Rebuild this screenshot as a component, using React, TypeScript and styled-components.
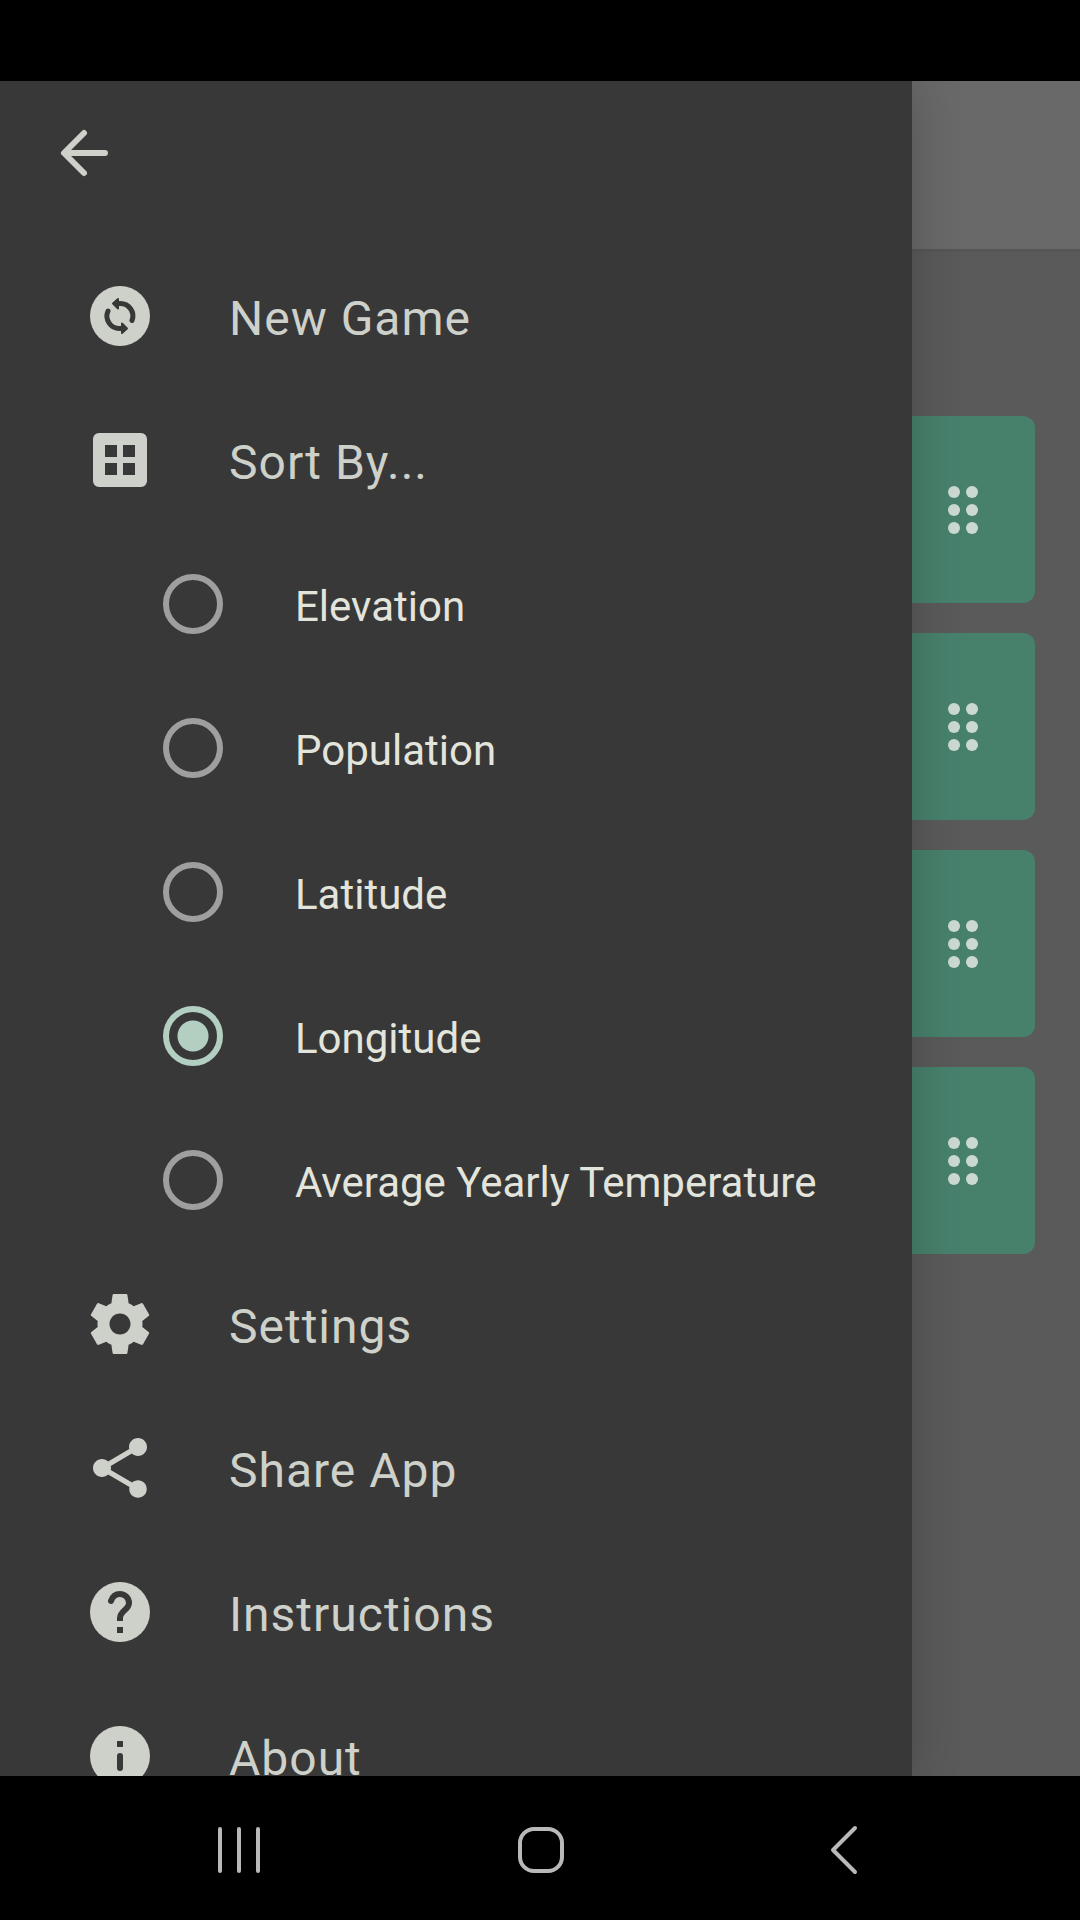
import React, { useState } from "react";
import styled, { createGlobalStyle } from "styled-components";
import { MdShare } from "react-icons/md";

const GlobalStyle = createGlobalStyle`
  *, *::before, *::after { box-sizing: border-box; }
  body { margin: 0; background: #000; }
`;

const Screen = styled.div`
  display: grid;
  grid-template-rows: 81px minmax(0, 1fr) 144px;
  height: 100vh;
  background: #000;
  font-family: Roboto, "Noto Sans", sans-serif;
`;

const StatusBar = styled.header`
  background: #000;
`;

const Stage = styled.div`
  position: relative;
  overflow: hidden;
  background: #5a5a5a;
`;

const AppBar = styled.div`
  height: 168px;
  background: #696969;
  box-shadow: 0 1px 3px rgba(0, 0, 0, 0.1);
`;

const CardList = styled.ul`
  display: flex;
  flex-direction: column;
  gap: 30px;
  margin: 0;
  padding: 167px 45px 0;
  list-style: none;
`;

const Card = styled.li`
  display: flex;
  align-items: center;
  justify-content: flex-end;
  height: 187px;
  padding-right: 36px;
  border-radius: 12px;
  background: #47816c;
  color: #ccd9d3;
`;

const Drawer = styled.aside`
  position: absolute;
  inset: 0 168px 0 0;
  overflow: hidden;
  background: #383838;
  box-shadow: 0 0 48px rgba(0, 0, 0, 0.2);
`;

const DrawerHeader = styled.div`
  display: flex;
  align-items: center;
  height: 144px;
  padding: 0 48px;
`;

const IconButton = styled.button`
  display: flex;
  padding: 0;
  border: 0;
  background: none;
  color: #ced0ca;
`;

const Menu = styled.nav`
  display: flex;
  flex-direction: column;
  padding-top: 19px;
`;

const MenuButton = styled.button`
  display: flex;
  align-items: center;
  gap: 73px;
  height: 144px;
  padding: 0 84px;
  border: 0;
  background: none;
  color: #ced0ca;
  font: 400 48px/56px Roboto, "Noto Sans", sans-serif;
  letter-spacing: 1px;
  text-align: left;
`;

const Label = styled.span`
  padding-top: 5px;
  white-space: nowrap;
`;

const SortOptions = styled.fieldset`
  margin: 0;
  padding: 0;
  border: 0;
`;

const Option = styled.label`
  display: flex;
  align-items: center;
  gap: 72px;
  height: 144px;
  padding-left: 163px;
  color: #e3e5dd;
  font-size: 42px;
  line-height: 50px;
`;

const Radio = styled.input`
  appearance: none;
  flex: none;
  width: 60px;
  height: 60px;
  margin: 0;
  border: 6px solid #9f9f9f;
  border-radius: 50%;

  &:checked {
    border-color: #b3cfc1;
    background: radial-gradient(circle, #b3cfc1 15px, transparent 16px);
  }
`;

const SystemBar = styled.footer`
  display: grid;
  grid-template-columns: repeat(3, 1fr);
  padding: 0 88px;
  background: #000;
`;

const SystemButton = styled.button`
  display: flex;
  align-items: center;
  justify-content: center;
  padding: 4px 0 0;
  border: 0;
  background: none;
  color: #b9b9b9;
`;

const Glyph = styled.svg.attrs({ viewBox: "0 0 72 72", "aria-hidden": true })`
  flex: none;
  width: 72px;
  height: 72px;
  fill: currentColor;
`;

const LineGlyph = styled(Glyph)`
  fill: none;
  stroke: currentColor;
  stroke-linecap: round;
  stroke-linejoin: round;
`;

const Cutout = styled.g`
  fill: none;
  stroke: #383838;
  stroke-width: 5;
  stroke-linecap: round;
`;

const Hole = styled.g`
  fill: #383838;
`;

const RoundedHole = styled(Hole)`
  stroke: #383838;
  stroke-width: 2;
  stroke-linejoin: round;
`;

const BackArrow = () => (
  <LineGlyph strokeWidth={6}>
    <path d="M57 36H17M36 16L16 36L36 56" />
  </LineGlyph>
);

const NewGameIcon = () => (
  <Glyph>
    <circle cx="36" cy="36" r="30" />
    <Cutout>
      <path d="M34 23.500H36A12.500 12.500 0 0 1 48 40.500" />
      <path d="M38 48.500H36A12.500 12.500 0 0 1 24 31" />
    </Cutout>
    <RoundedHole>
      <path d="M34 19V28.500L29 23.500Z" />
      <path d="M38 53V43.500L43 48.500Z" />
    </RoundedHole>
  </Glyph>
);

const SortIcon = () => (
  <Glyph>
    <path
      fillRule="evenodd"
      d="M15 9H57A6 6 0 0 1 63 15V57A6 6 0 0 1 57 63H15A6 6 0 0 1 9 57V15A6 6 0 0 1 15 9ZM21 21V33H33V21ZM39 21V33H51V21ZM21 39V51H33V39ZM39 39V51H51V39Z"
    />
  </Glyph>
);

const SettingsIcon = () => (
  <Glyph>
    <path
      transform="scale(3)"
      d="M19.43 12.98c.04-.32.07-.64.07-.98s-.03-.66-.07-.98l2.110-1.650c.19-.15.24-.42.12-.64l-2-3.460c-.12-.22-.39-.3-.61-.22l-2.490 1c-.52-.4-1.080-.73-1.690-.98l-.38-2.650C14.460 2.180 14.250 2 14 2h-4c-.25 0-.46.18-.49.42l-.38 2.650c-.61.25-1.170.59-1.690.98l-2.490-1c-.23-.09-.49 0-.61.22l-2 3.460c-.13.22-.07.49.12.64l2.110 1.650c-.04.32-.07.65-.07.98s.03.66.07.98l-2.110 1.650c-.19.15-.24.42-.12.64l2 3.460c.12.22.39.3.61.22l2.490-1c.52.4 1.080.73 1.690.98l.38 2.650c.03.24.24.42.49.42h4c.25 0 .46-.18.49-.42l.38-2.650c.61-.25 1.170-.59 1.690-.98l2.490 1c.23.09.49 0 .61-.22l2-3.460c.12-.22.07-.49-.12-.64l-2.110-1.650zM12 15.500c-1.930 0-3.500-1.570-3.500-3.500s1.570-3.500 3.500-3.500 3.500 1.570 3.500 3.500-1.570 3.500-3.500 3.500z"
    />
  </Glyph>
);

const HelpIcon = () => (
  <Glyph>
    <circle cx="36" cy="36" r="30" />
    <Cutout>
      <path
        strokeWidth="6"
        d="M27 25C28.500 20.500 32 18 36 18C41 18 45 22 45 27C45 34 36 34.500 36 42"
      />
    </Cutout>
    <Hole>
      <rect x="33" y="41" width="6" height="4" />
      <rect x="33" y="51" width="6" height="6" />
    </Hole>
  </Glyph>
);

const InfoIcon = () => (
  <Glyph>
    <circle cx="36" cy="36" r="30" />
    <Hole>
      <rect x="33" y="21" width="6" height="6" />
      <rect x="33" y="33" width="6" height="18" rx="3" />
    </Hole>
  </Glyph>
);

const DragHandle = () => (
  <Glyph>
    {[18, 36, 54].map((y) => (
      <React.Fragment key={y}>
        <circle cx="27" cy={y} r="6" />
        <circle cx="45" cy={y} r="6" />
      </React.Fragment>
    ))}
  </Glyph>
);

const sortOptions = [
  "Elevation",
  "Population",
  "Latitude",
  "Longitude",
  "Average Yearly Temperature",
];

type MenuItemProps = { icon: React.ReactNode; children: React.ReactNode };

const MenuItem = ({ icon, children }: MenuItemProps) => (
  <MenuButton type="button">
    {icon}
    <Label>{children}</Label>
  </MenuButton>
);

export default function App() {
  const [sortBy, setSortBy] = useState("Longitude");

  return (
    <Screen>
      <GlobalStyle />
      <StatusBar />
      <Stage>
        <AppBar />
        <CardList>
          {[1, 2, 3, 4].map((n) => (
            <Card key={n}>
              <DragHandle />
            </Card>
          ))}
        </CardList>
        <Drawer>
          <DrawerHeader>
            <IconButton type="button" aria-label="Close menu">
              <BackArrow />
            </IconButton>
          </DrawerHeader>
          <Menu>
            <MenuItem icon={<NewGameIcon />}>New Game</MenuItem>
            <MenuItem icon={<SortIcon />}>Sort By...</MenuItem>
            <SortOptions aria-label="Sort by">
              {sortOptions.map((name) => (
                <Option key={name}>
                  <Radio
                    type="radio"
                    name="sort"
                    value={name}
                    checked={sortBy === name}
                    onChange={() => setSortBy(name)}
                  />
                  <Label>{name}</Label>
                </Option>
              ))}
            </SortOptions>
            <MenuItem icon={<SettingsIcon />}>Settings</MenuItem>
            <MenuItem icon={<MdShare size={72} />}>Share App</MenuItem>
            <MenuItem icon={<HelpIcon />}>Instructions</MenuItem>
            <MenuItem icon={<InfoIcon />}>About</MenuItem>
          </Menu>
        </Drawer>
      </Stage>
      <SystemBar>
        <SystemButton type="button" aria-label="Recent apps">
          <LineGlyph strokeWidth={4}>
            <path d="M17 15V57M36 15V57M55 15V57" />
          </LineGlyph>
        </SystemButton>
        <SystemButton type="button" aria-label="Home">
          <LineGlyph strokeWidth={4}>
            <rect x="16" y="15" width="42" height="42" rx="14" />
          </LineGlyph>
        </SystemButton>
        <SystemButton type="button" aria-label="Back">
          <LineGlyph strokeWidth={4}>
            <path d="M50 14L28 36L50 58" />
          </LineGlyph>
        </SystemButton>
      </SystemBar>
    </Screen>
  );
}
